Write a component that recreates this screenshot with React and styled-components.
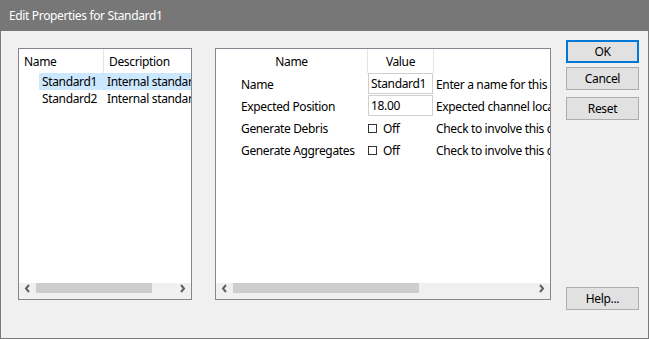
import React from "react";
import styled, { createGlobalStyle } from "styled-components";

const GlobalStyle = createGlobalStyle`
  body {
    margin: 0;
    font-family: "Noto Sans", "Open Sans", sans-serif;
    font-size: 12px;
    letter-spacing: -0.35px;
    color: #000;
  }
`;

const properties = [
  { name: "Name", kind: "text", value: "Standard1", help: "Enter a name for this standard" },
  { name: "Expected Position", kind: "text", value: "18.00", help: "Expected channel location" },
  { name: "Generate Debris", kind: "check", value: "Off", help: "Check to involve this channel" },
  { name: "Generate Aggregates", kind: "check", value: "Off", help: "Check to involve this channel" },
];

const standards = [
  { name: "Standard1", description: "Internal standard", selected: true },
  { name: "Standard2", description: "Internal standard" },
];

function Chevron({ dir }) {
  const pts = dir === "left" ? "5,1 2,4.5 5,8" : "2,1 5,4.5 2,8";
  return (
    <svg width="7" height="9" viewBox="0 0 7 9">
      <polyline points={pts} fill="none" stroke="#606060" strokeWidth="2" />
    </svg>
  );
}

function ScrollBar({ thumbWidth }) {
  return (
    <ScrollTrack>
      <ArrowBox>
        <Chevron dir="left" />
      </ArrowBox>
      <Thumb style={{ width: thumbWidth }} />
      <Spacer />
      <ArrowBox>
        <Chevron dir="right" />
      </ArrowBox>
    </ScrollTrack>
  );
}

export default function App() {
  return (
    <>
      <GlobalStyle />
      <Window>
        <TitleBar>Edit Properties for Standard1</TitleBar>
        <Body>
          <ListPanel>
            <ListHeader>
              <HeaderCell width={85}>Name</HeaderCell>
              <HeaderCell>Description</HeaderCell>
            </ListHeader>
            <ListArea>
              {standards.map((s) => (
                <ListRow key={s.name} selected={s.selected}>
                  <ListName>{s.name}</ListName>
                  <ListDesc>{s.description}</ListDesc>
                </ListRow>
              ))}
            </ListArea>
            <ScrollBar thumbWidth={116} />
          </ListPanel>

          <GridPanel>
            <GridHeader>
              <GridHeadCell>Name</GridHeadCell>
              <GridHeadCell>Value</GridHeadCell>
              <GridHeadCell last />
            </GridHeader>
            <GridArea>
              {properties.map((p) => (
                <GridRow key={p.name}>
                  <Label>{p.name}</Label>
                  <ValueCell>
                    {p.kind === "text" ? (
                      <ValueBox>{p.value}</ValueBox>
                    ) : (
                      <CheckWrap>
                        <CheckBox />
                        <span>{p.value}</span>
                      </CheckWrap>
                    )}
                  </ValueCell>
                  <HelpText>{p.help}</HelpText>
                </GridRow>
              ))}
            </GridArea>
            <ScrollBar thumbWidth={186} />
          </GridPanel>

          <ButtonColumn>
            <Button primary>OK</Button>
            <Button gap={4}>Cancel</Button>
            <Button gap={7}>Reset</Button>
            <Button gap={167}>Help...</Button>
          </ButtonColumn>
        </Body>
      </Window>
    </>
  );
}

const Window = styled.div`
  width: 649px;
  height: 339px;
  box-sizing: border-box;
  background: #f0f0f0;
  border: 1px solid #7a7a7a;
  border-top: none;
  display: flex;
  flex-direction: column;
`;

const TitleBar = styled.div`
  height: 31px;
  margin: 0 -1px;
  padding-left: 9px;
  background: #777777;
  color: #fff;
  line-height: 31px;
`;

const Body = styled.div`
  display: flex;
  align-items: flex-start;
  padding: 9px 9px 0 17px;
`;

const Panel = styled.div`
  margin-top: 8px;
  height: 252px;
  box-sizing: border-box;
  border: 1px solid #828790;
  background: #fff;
  display: flex;
  flex-direction: column;
  overflow: hidden;
`;

const ListPanel = styled(Panel)`
  width: 174px;
`;

const GridPanel = styled(Panel)`
  width: 336px;
  margin-left: 23px;
`;

const ListHeader = styled.div`
  display: flex;
  height: 24px;
  flex-shrink: 0;
`;

const HeaderCell = styled.div`
  width: ${(p) => (p.width ? `${p.width}px` : "auto")};
  flex: ${(p) => (p.width ? "none" : "1")};
  box-sizing: border-box;
  padding-left: 5px;
  padding-top: 1px;
  line-height: 24px;
  border-right: ${(p) => (p.width ? "1px solid #e5e5e5" : "none")};
  white-space: nowrap;
  overflow: hidden;
`;

const ListArea = styled.div`
  flex: 1;
`;

const ListRow = styled.div`
  display: flex;
  height: 17px;
  line-height: 17px;
  margin-left: 20px;
  background: ${(p) => (p.selected ? "#cce8ff" : "transparent")};
  white-space: nowrap;
`;

const ListName = styled.div`
  width: 64px;
  flex: none;
  padding-left: 3px;
  box-sizing: border-box;
`;

const ListDesc = styled.div`
  padding-left: 4px;
  overflow: hidden;
`;

const GridHeader = styled.div`
  display: grid;
  grid-template-columns: 152px 66px 1fr;
  height: 24px;
  flex-shrink: 0;
`;

const GridHeadCell = styled.div`
  border-right: ${(p) => (p.last ? "none" : "1px solid #e5e5e5")};
  text-align: center;
  padding-top: 1px;
  line-height: 24px;
  overflow: hidden;
`;

const GridArea = styled.div`
  flex: 1;
`;

const GridRow = styled.div`
  display: grid;
  grid-template-columns: 152px 66px 1fr;
  height: 22px;
  align-items: center;
  white-space: nowrap;
`;

const Label = styled.div`
  padding-left: 25px;
  padding-top: 1px;
`;

const ValueCell = styled.div`
  align-self: start;
  height: 22px;
  display: flex;
  align-items: center;
`;

const ValueBox = styled.div`
  width: 65px;
  height: 21px;
  margin-bottom: 1px;
  box-sizing: border-box;
  border: 1px solid #cfcfcf;
  padding-left: 2px;
  line-height: 20px;
  align-self: flex-start;
  overflow: hidden;
`;

const CheckWrap = styled.div`
  display: flex;
  align-items: center;
`;

const CheckBox = styled.div`
  width: 9px;
  height: 9px;
  box-sizing: border-box;
  border: 1px solid #333;
  margin-right: 6px;
  margin-top: 1px;
`;

const HelpText = styled.div`
  padding-left: 2px;
  padding-top: 1px;
  overflow: hidden;
`;

const ScrollTrack = styled.div`
  height: 16px;
  flex-shrink: 0;
  background: #f0f0f0;
  display: flex;
  align-items: flex-start;
`;

const ArrowBox = styled.div`
  width: 17px;
  height: 11px;
  display: flex;
  align-items: center;
  justify-content: center;
`;

const Thumb = styled.div`
  height: 10px;
  background: #cdcdcd;
`;

const Spacer = styled.div`
  flex: 1;
`;

const ButtonColumn = styled.div`
  margin-left: 15px;
  width: 73px;
  display: flex;
  flex-direction: column;
`;

const Button = styled.div`
  height: 23px;
  margin-top: ${(p) => p.gap || 0}px;
  box-sizing: border-box;
  border: ${(p) => (p.primary ? "2px solid #0078d7" : "1px solid #adadad")};
  background: #e1e1e1;
  display: flex;
  align-items: center;
  justify-content: center;
`;
